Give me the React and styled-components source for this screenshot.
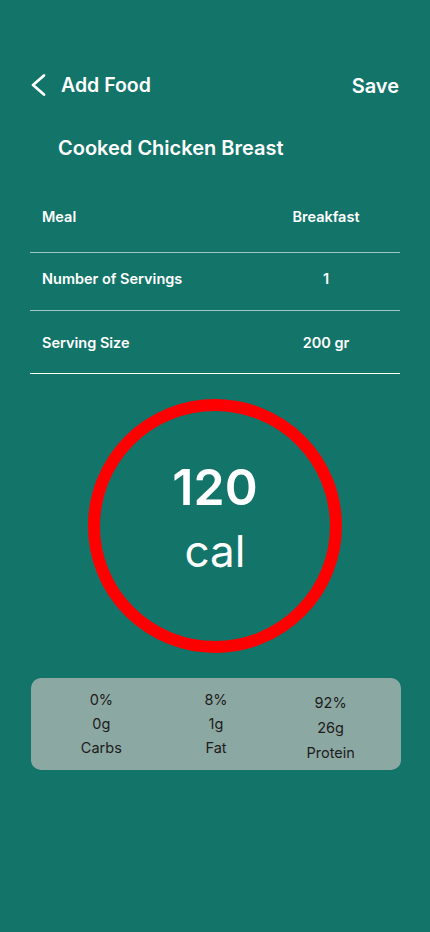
import React from 'react';
import styled, { createGlobalStyle } from 'styled-components';

const GlobalStyle = createGlobalStyle`
  * { box-sizing: border-box; }
  body {
    margin: 0;
    background: #137469;
    font-family: Inter, "Noto Sans", "Liberation Sans", sans-serif;
  }
`;

const Screen = styled.div`
  width: 430px;
  min-height: 932px;
  background-color: #137469;
  color: #fff;
  padding-top: 70px;
`;

const Header = styled.div`
  display: flex;
  align-items: center;
  justify-content: space-between;
  height: 30px;
  padding: 0 31px 0 30px;
`;

const BackButton = styled.button`
  display: flex;
  align-items: center;
  gap: 14px;
  background: none;
  border: none;
  padding: 0;
  color: #fff;
  font-family: inherit;
  font-size: 19.5px;
  font-weight: 600;
  cursor: pointer;
`;

const SaveButton = styled.button`
  background: none;
  border: none;
  padding: 0;
  margin-top: 2px;
  color: #fff;
  font-family: inherit;
  font-size: 20px;
  font-weight: 600;
  cursor: pointer;
`;

const FoodName = styled.h1`
  margin: 36px 0 0 58px;
  font-size: 20px;
  font-weight: 600;
  line-height: 24px;
`;

const DetailTable = styled.div`
  margin: 21px 30px 0;
  display: flex;
  flex-direction: column;
`;

const DetailRow = styled.div`
  display: grid;
  grid-template-columns: 1fr 148px;
  align-items: center;
  height: ${props => props.height}px;
  padding: 0 0 ${props => props.lift || 0}px 12px;
  border-bottom: 1px solid ${props => (props.last ? '#ffffff' : 'rgba(255, 255, 255, 0.6)')};
  font-size: 14.5px;
  font-weight: 600;
`;

const DetailValue = styled.span`
  text-align: center;
`;

const CalorieRing = styled.div`
  width: 254px;
  height: 254px;
  margin: 25px auto 0;
  border: 12px solid #ff0000;
  border-radius: 50%;
  display: flex;
  flex-direction: column;
  align-items: center;
  justify-content: center;
  padding-bottom: 18px;
`;

const CalorieValue = styled.div`
  font-size: 50px;
  font-weight: 600;
  line-height: 60px;
`;

const CalorieUnit = styled.div`
  font-size: 44px;
  font-weight: 400;
  line-height: 52px;
  margin-top: 8px;
`;

const MacroCard = styled.div`
  margin: 25px 29px 0 31px;
  height: 92px;
  border-radius: 10px;
  background-color: #8ca8a2;
  display: grid;
  grid-template-columns: repeat(3, 1fr);
  padding: 10px 13px 0;
  color: #1c1c1c;
`;

const MacroColumn = styled.div`
  display: flex;
  flex-direction: column;
  align-items: center;
  padding-top: ${props => props.shift || 0}px;
  font-size: 14.5px;
  line-height: ${props => props.lineHeight || 24}px;
`;

const ChevronLeft = () => (
  <svg width="17" height="24" viewBox="0 0 17 24" fill="none">
    <path d="M14 2.5 L3 12 L14 21.5" stroke="#fff" strokeWidth="2.8" strokeLinecap="round" strokeLinejoin="round" />
  </svg>
);

const details = [
  { label: 'Meal', value: 'Breakfast', height: 72 },
  { label: 'Number of Servings', value: '1', height: 58, lift: 6 },
  { label: 'Serving Size', value: '200 gr', height: 63, last: true },
];

const macros = [
  { percent: '0%', grams: '0g', name: 'Carbs' },
  { percent: '8%', grams: '1g', name: 'Fat' },
  { percent: '92%', grams: '26g', name: 'Protein', shift: 2, lineHeight: 25 },
];

const App = () => (
  <Screen>
    <GlobalStyle />
    <Header>
      <BackButton>
        <ChevronLeft />
        Add Food
      </BackButton>
      <SaveButton>Save</SaveButton>
    </Header>

    <FoodName>Cooked Chicken Breast</FoodName>

    <DetailTable>
      {details.map(row => (
        <DetailRow key={row.label} height={row.height} lift={row.lift} last={row.last}>
          <span>{row.label}</span>
          <DetailValue>{row.value}</DetailValue>
        </DetailRow>
      ))}
    </DetailTable>

    <CalorieRing>
      <CalorieValue>120</CalorieValue>
      <CalorieUnit>cal</CalorieUnit>
    </CalorieRing>

    <MacroCard>
      {macros.map(m => (
        <MacroColumn key={m.name} shift={m.shift} lineHeight={m.lineHeight}>
          <span>{m.percent}</span>
          <span>{m.grams}</span>
          <span>{m.name}</span>
        </MacroColumn>
      ))}
    </MacroCard>
  </Screen>
);

export default App;
